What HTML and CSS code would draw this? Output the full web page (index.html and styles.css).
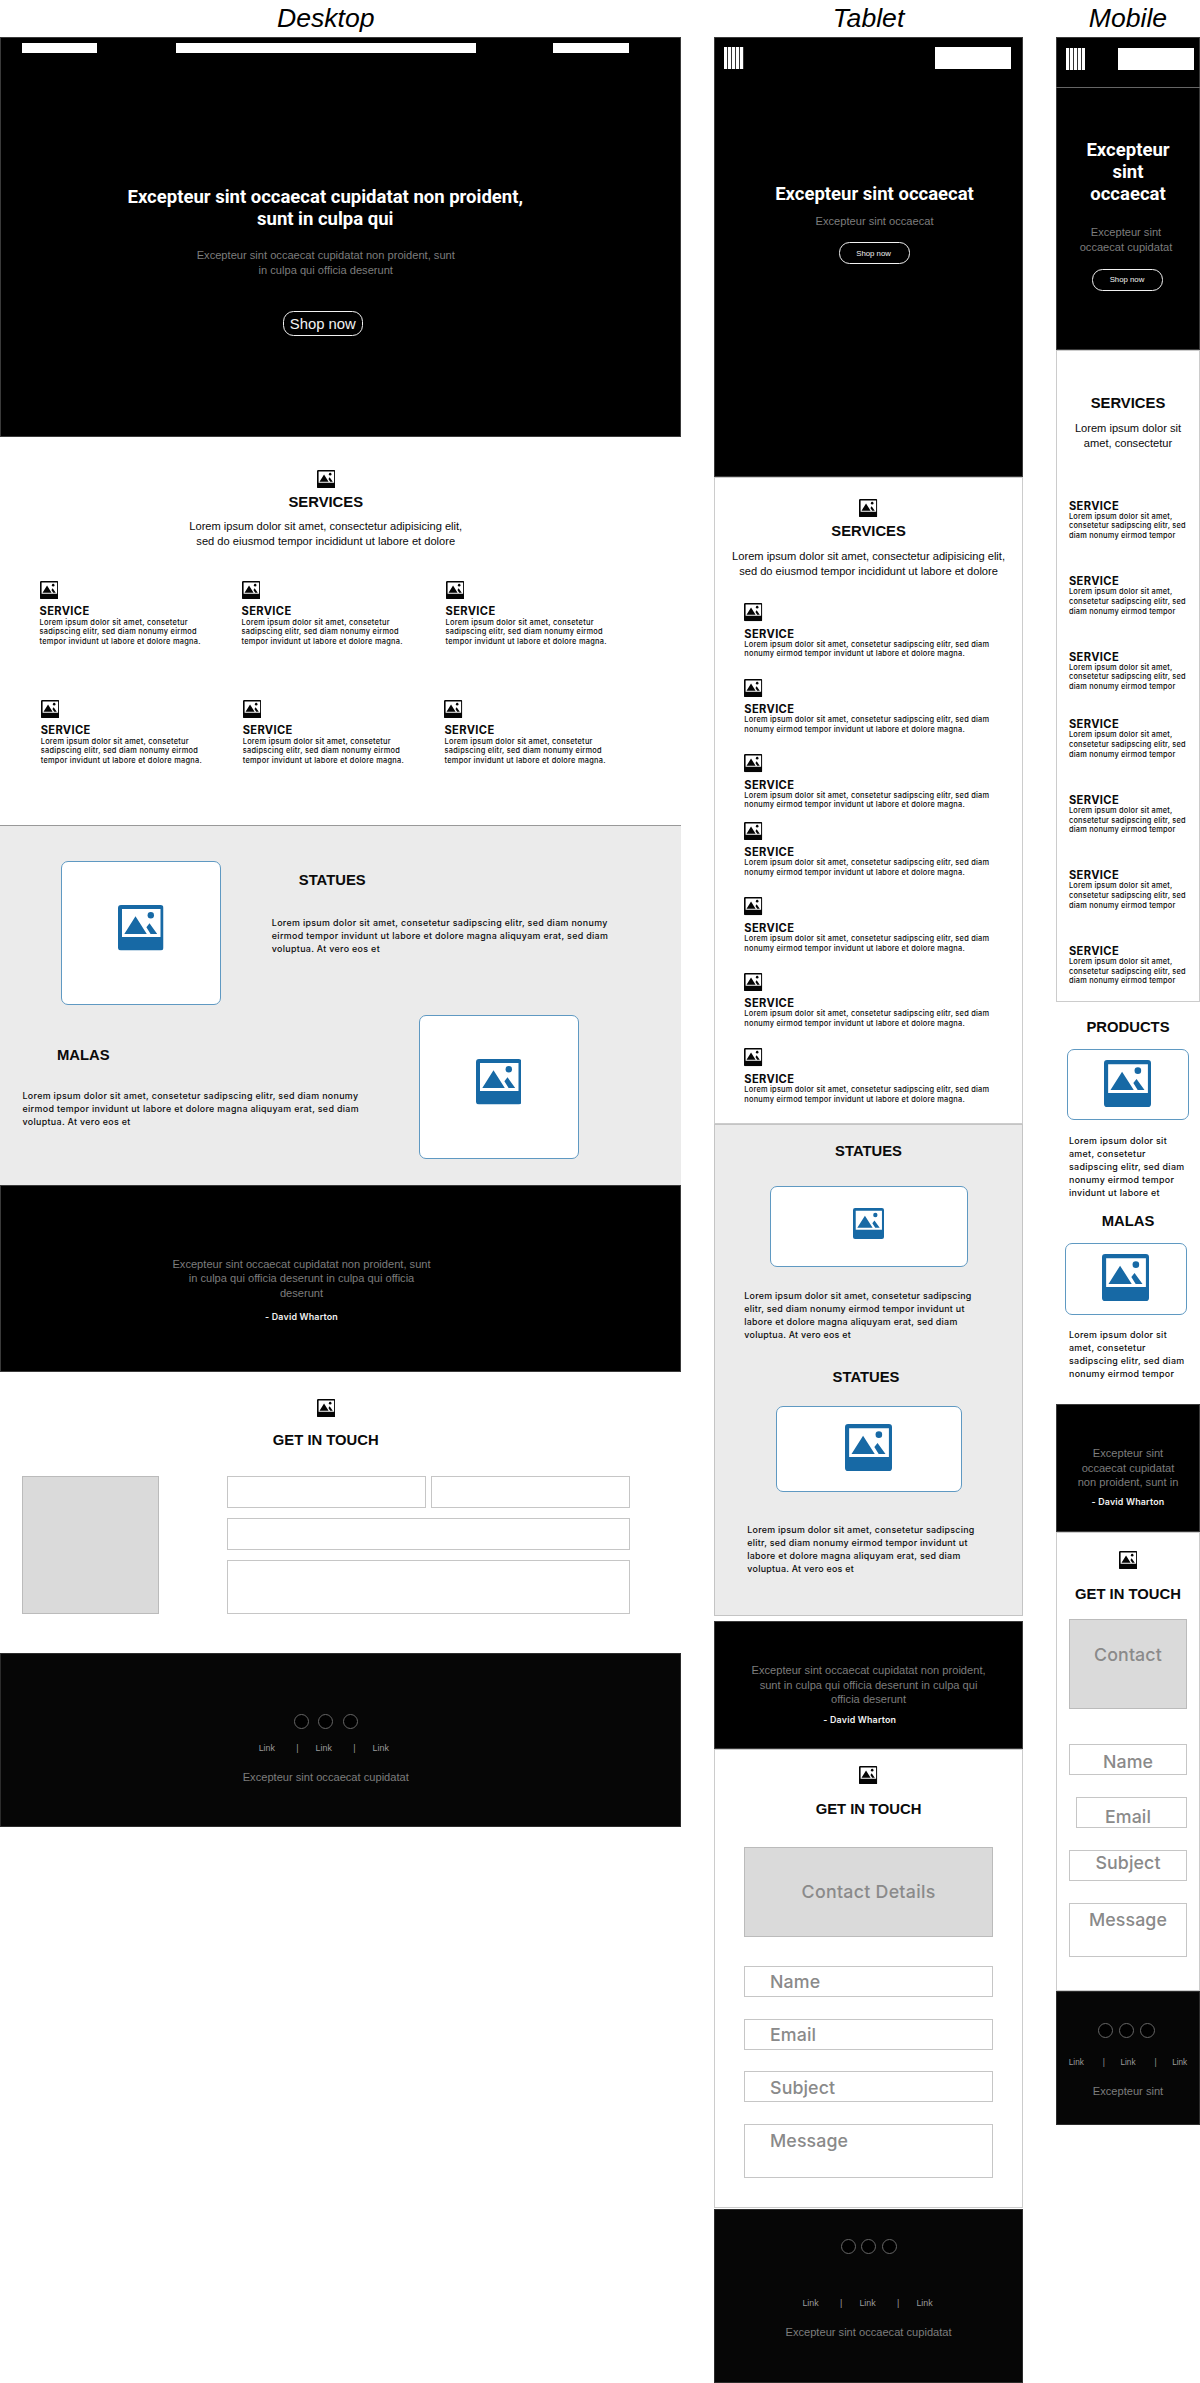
FILE: index.html
```html
<!DOCTYPE html>
<html lang="en">
<head>
<meta charset="utf-8">
<title>Responsive wireframes</title>
<link rel="stylesheet" href="styles.css">
</head>
<body>
<svg class="sprite" aria-hidden="true">
  <symbol id="photo" viewBox="0 0 45.5 45.5">
    <path fill-rule="evenodd" d="M3 0H42.5Q45.5 0 45.5 3V42.5Q45.5 45.5 42.5 45.5H3Q0 45.5 0 42.5V3Q0 0 3 0ZM4 4V32H42.5V4Z"/>
    <path d="M17.5 11.3L28.8 29H6.3ZM31.5 18.3L39.2 29H32.6L28.4 22.3Z"/>
    <circle cx="32.8" cy="10.3" r="3.2"/>
  </symbol>
</svg>
<main class="board">

  <article class="frame desktop">
    <h1 class="frame-title">Desktop</h1>
    <section class="dark hero">
      <nav class="nav"><span class="bar logo-bar"></span><span class="bar menu-bar"></span><span class="bar side-bar"></span></nav>
      <h2 class="headline">Excepteur sint occaecat cupidatat non proident,<br>sunt in culpa qui</h2>
      <p class="lead">Excepteur sint occaecat cupidatat non proident, sunt<br>in culpa qui officia deserunt</p>
      <a class="button">Shop now</a>
    </section>
    <section class="light services">
      <svg class="icon"><use href="#photo"/></svg>
      <h3 class="heading">SERVICES</h3>
      <p class="intro">Lorem ipsum dolor sit amet, consectetur adipisicing elit,<br>sed do eiusmod tempor incididunt ut labore et dolore</p>
      <div class="service-row">
        <div class="service"><svg class="icon"><use href="#photo"/></svg><h4>SERVICE</h4><p>Lorem ipsum dolor sit amet, consetetur<br>sadipscing elitr, sed diam nonumy eirmod<br>tempor invidunt ut labore et dolore magna.</p></div>
        <div class="service"><svg class="icon"><use href="#photo"/></svg><h4>SERVICE</h4><p>Lorem ipsum dolor sit amet, consetetur<br>sadipscing elitr, sed diam nonumy eirmod<br>tempor invidunt ut labore et dolore magna.</p></div>
        <div class="service"><svg class="icon"><use href="#photo"/></svg><h4>SERVICE</h4><p>Lorem ipsum dolor sit amet, consetetur<br>sadipscing elitr, sed diam nonumy eirmod<br>tempor invidunt ut labore et dolore magna.</p></div>
      </div>
      <div class="service-row second">
        <div class="service"><svg class="icon"><use href="#photo"/></svg><h4>SERVICE</h4><p>Lorem ipsum dolor sit amet, consetetur<br>sadipscing elitr, sed diam nonumy eirmod<br>tempor invidunt ut labore et dolore magna.</p></div>
        <div class="service"><svg class="icon"><use href="#photo"/></svg><h4>SERVICE</h4><p>Lorem ipsum dolor sit amet, consetetur<br>sadipscing elitr, sed diam nonumy eirmod<br>tempor invidunt ut labore et dolore magna.</p></div>
        <div class="service"><svg class="icon"><use href="#photo"/></svg><h4>SERVICE</h4><p>Lorem ipsum dolor sit amet, consetetur<br>sadipscing elitr, sed diam nonumy eirmod<br>tempor invidunt ut labore et dolore magna.</p></div>
      </div>
    </section>
    <section class="shaded products">
      <div class="product statues">
        <div class="card"><svg class="picture"><use href="#photo"/></svg></div>
        <div class="copy">
          <h3 class="heading">STATUES</h3>
          <p class="body-text">Lorem ipsum dolor sit amet, consetetur sadipscing elitr, sed diam nonumy<br>eirmod tempor invidunt ut labore et dolore magna aliquyam erat, sed diam<br>voluptua. At vero eos et</p>
        </div>
      </div>
      <div class="product malas">
        <div class="copy">
          <h3 class="heading">MALAS</h3>
          <p class="body-text">Lorem ipsum dolor sit amet, consetetur sadipscing elitr, sed diam nonumy<br>eirmod tempor invidunt ut labore et dolore magna aliquyam erat, sed diam<br>voluptua. At vero eos et</p>
        </div>
        <div class="card"><svg class="picture"><use href="#photo"/></svg></div>
      </div>
    </section>
    <section class="dark quote">
      <p class="lead">Excepteur sint occaecat cupidatat non proident, sunt<br>in culpa qui officia deserunt in culpa qui officia<br>deserunt</p>
      <p class="author">- David Wharton</p>
    </section>
    <section class="light contact">
      <svg class="icon"><use href="#photo"/></svg>
      <h3 class="heading">GET IN TOUCH</h3>
      <div class="contact-row">
        <div class="details"></div>
        <div class="form"><span class="field"></span><span class="field"></span><span class="field wide"></span><span class="field wide"></span></div>
      </div>
    </section>
    <footer class="footer">
      <div class="social"><i></i><i></i><i></i></div>
      <div class="links"><a>Link</a><span>|</span><a>Link</a><span>|</span><a>Link</a></div>
      <p class="lead">Excepteur sint occaecat cupidatat</p>
    </footer>
  </article>

  <article class="frame tablet">
    <h1 class="frame-title">Tablet</h1>
    <section class="dark hero">
      <nav class="nav"><span class="burger"></span><span class="bar"></span></nav>
      <h2 class="headline">Excepteur sint occaecat</h2>
      <p class="lead">Excepteur sint occaecat</p>
      <a class="button">Shop now</a>
    </section>
    <section class="light services">
      <svg class="icon"><use href="#photo"/></svg>
      <h3 class="heading">SERVICES</h3>
      <p class="intro">Lorem ipsum dolor sit amet, consectetur adipisicing elit,<br>sed do eiusmod tempor incididunt ut labore et dolore</p>
      <div class="service-list">
        <div class="service"><svg class="icon"><use href="#photo"/></svg><h4>SERVICE</h4><p>Lorem ipsum dolor sit amet, consetetur sadipscing elitr, sed diam<br>nonumy eirmod tempor invidunt ut labore et dolore magna.</p></div>
        <div class="service"><svg class="icon"><use href="#photo"/></svg><h4>SERVICE</h4><p>Lorem ipsum dolor sit amet, consetetur sadipscing elitr, sed diam<br>nonumy eirmod tempor invidunt ut labore et dolore magna.</p></div>
        <div class="service"><svg class="icon"><use href="#photo"/></svg><h4>SERVICE</h4><p>Lorem ipsum dolor sit amet, consetetur sadipscing elitr, sed diam<br>nonumy eirmod tempor invidunt ut labore et dolore magna.</p></div>
        <div class="service"><svg class="icon"><use href="#photo"/></svg><h4>SERVICE</h4><p>Lorem ipsum dolor sit amet, consetetur sadipscing elitr, sed diam<br>nonumy eirmod tempor invidunt ut labore et dolore magna.</p></div>
        <div class="service"><svg class="icon"><use href="#photo"/></svg><h4>SERVICE</h4><p>Lorem ipsum dolor sit amet, consetetur sadipscing elitr, sed diam<br>nonumy eirmod tempor invidunt ut labore et dolore magna.</p></div>
        <div class="service"><svg class="icon"><use href="#photo"/></svg><h4>SERVICE</h4><p>Lorem ipsum dolor sit amet, consetetur sadipscing elitr, sed diam<br>nonumy eirmod tempor invidunt ut labore et dolore magna.</p></div>
        <div class="service"><svg class="icon"><use href="#photo"/></svg><h4>SERVICE</h4><p>Lorem ipsum dolor sit amet, consetetur sadipscing elitr, sed diam<br>nonumy eirmod tempor invidunt ut labore et dolore magna.</p></div>
      </div>
    </section>
    <section class="shaded products">
      <div class="product first">
        <h3 class="heading">STATUES</h3>
        <div class="card"><svg class="picture"><use href="#photo"/></svg></div>
        <p class="body-text">Lorem ipsum dolor sit amet, consetetur sadipscing<br>elitr, sed diam nonumy eirmod tempor invidunt ut<br>labore et dolore magna aliquyam erat, sed diam<br>voluptua. At vero eos et</p>
      </div>
      <div class="product last">
        <h3 class="heading">STATUES</h3>
        <div class="card"><svg class="picture"><use href="#photo"/></svg></div>
        <p class="body-text">Lorem ipsum dolor sit amet, consetetur sadipscing<br>elitr, sed diam nonumy eirmod tempor invidunt ut<br>labore et dolore magna aliquyam erat, sed diam<br>voluptua. At vero eos et</p>
      </div>
    </section>
    <section class="dark quote">
      <p class="lead">Excepteur sint occaecat cupidatat non proident,<br>sunt in culpa qui officia deserunt in culpa qui<br>officia deserunt</p>
      <p class="author">- David Wharton</p>
    </section>
    <section class="light contact">
      <svg class="icon"><use href="#photo"/></svg>
      <h3 class="heading">GET IN TOUCH</h3>
      <div class="details">Contact Details</div>
      <div class="form"><span class="field">Name</span><span class="field">Email</span><span class="field">Subject</span><span class="field message">Message</span></div>
    </section>
    <footer class="footer">
      <div class="social"><i></i><i></i><i></i></div>
      <div class="links"><a>Link</a><span>|</span><a>Link</a><span>|</span><a>Link</a></div>
      <p class="lead">Excepteur sint occaecat cupidatat</p>
    </footer>
  </article>

  <article class="frame mobile">
    <h1 class="frame-title">Mobile</h1>
    <section class="dark hero">
      <nav class="nav"><span class="burger"></span><span class="bar"></span></nav>
      <h2 class="headline">Excepteur<br>sint<br>occaecat</h2>
      <p class="lead">Excepteur sint<br>occaecat cupidatat</p>
      <a class="button">Shop now</a>
    </section>
    <section class="light services">
      <h3 class="heading">SERVICES</h3>
      <p class="intro">Lorem ipsum dolor sit<br>amet, consectetur</p>
      <div class="service-list">
        <div class="service"><h4>SERVICE</h4><p>Lorem ipsum dolor sit amet,<br>consetetur sadipscing elitr, sed<br>diam nonumy eirmod tempor</p></div>
        <div class="service"><h4>SERVICE</h4><p>Lorem ipsum dolor sit amet,<br>consetetur sadipscing elitr, sed<br>diam nonumy eirmod tempor</p></div>
        <div class="service"><h4>SERVICE</h4><p>Lorem ipsum dolor sit amet,<br>consetetur sadipscing elitr, sed<br>diam nonumy eirmod tempor</p></div>
        <div class="service"><h4>SERVICE</h4><p>Lorem ipsum dolor sit amet,<br>consetetur sadipscing elitr, sed<br>diam nonumy eirmod tempor</p></div>
        <div class="service"><h4>SERVICE</h4><p>Lorem ipsum dolor sit amet,<br>consetetur sadipscing elitr, sed<br>diam nonumy eirmod tempor</p></div>
        <div class="service"><h4>SERVICE</h4><p>Lorem ipsum dolor sit amet,<br>consetetur sadipscing elitr, sed<br>diam nonumy eirmod tempor</p></div>
        <div class="service"><h4>SERVICE</h4><p>Lorem ipsum dolor sit amet,<br>consetetur sadipscing elitr, sed<br>diam nonumy eirmod tempor</p></div>
      </div>
    </section>
    <section class="products">
      <div class="product first">
        <h3 class="heading">PRODUCTS</h3>
        <div class="card"><svg class="picture"><use href="#photo"/></svg></div>
        <p class="body-text">Lorem ipsum dolor sit<br>amet, consetetur<br>sadipscing elitr, sed diam<br>nonumy eirmod tempor<br>invidunt ut labore et</p>
      </div>
      <div class="product last">
        <h3 class="heading">MALAS</h3>
        <div class="card"><svg class="picture"><use href="#photo"/></svg></div>
        <p class="body-text">Lorem ipsum dolor sit<br>amet, consetetur<br>sadipscing elitr, sed diam<br>nonumy eirmod tempor</p>
      </div>
    </section>
    <section class="dark quote">
      <p class="lead">Excepteur sint<br>occaecat cupidatat<br>non proident, sunt in</p>
      <p class="author">- David Wharton</p>
    </section>
    <section class="light contact">
      <svg class="icon"><use href="#photo"/></svg>
      <h3 class="heading">GET IN TOUCH</h3>
      <div class="details">Contact</div>
      <div class="form"><span class="field name">Name</span><span class="field email">Email</span><span class="field subject">Subject</span><span class="field message">Message</span></div>
    </section>
    <footer class="footer">
      <div class="social"><i></i><i></i><i></i></div>
      <div class="links"><a>Link</a><span>|</span><a>Link</a><span>|</span><a>Link</a></div>
      <p class="lead">Excepteur sint</p>
    </footer>
  </article>

</main>
</body>
</html>
```
FILE: styles.css
```css
* { box-sizing: border-box; }

body {
  margin: 0;
  background: #fff;
  color: #0a0a0a;
  font-family: "Liberation Sans", Arial, sans-serif;
  white-space: nowrap;
}

h1, h2, h3, h4, p { margin: 0; }
svg { display: block; flex: none; }
.sprite { display: none; }

.board { display: flex; align-items: flex-start; width: 1200px; height: 2383px; overflow: hidden; }
.frame { flex: none; }
.desktop { width: 680.5px; }
.tablet { width: 308.5px; margin-left: 33.8px; }
.mobile { width: 144px; margin-left: 33.2px; }

section, .footer { display: flex; flex-direction: column; align-items: center; }

/* Shared pieces */
.frame-title {
  height: 37px;
  padding-top: 1px;
  font-size: 26.6px;
  font-style: italic;
  font-weight: 400;
  line-height: 34px;
  text-align: center;
  color: #000;
}
.dark { background: #000; box-shadow: inset 0 0 0 1px #3a3a3a; }
.light { background: #fff; box-shadow: inset 0 0 0 1px #ccc; }
.shaded { background: #ebebeb; box-shadow: inset 0 0 0 1px #c4c4c4; }
.footer { background: #060606; box-shadow: inset 0 0 0 1px #2c2c2c; }

.headline {
  font: 700 18.5px/22.25px Roboto, sans-serif;
  color: #fff;
  text-align: center;
}
.lead, .intro { font-size: 11.12px; line-height: 14.83px; text-align: center; }
.lead { color: #7d7d7d; }
.heading { font-size: 14.8px; line-height: 18px; font-weight: 700; text-align: center; }
.body-text { font: 500 8.9px/13px Inter, sans-serif; letter-spacing: 0.31px; }
.author { font: 600 8.9px/12px Inter, sans-serif; letter-spacing: 0.18px; color: #f2f2f2; }
.icon { width: 18.3px; height: 18.3px; fill: #050505; }
.picture { width: 47px; height: 47px; fill: #1769a5; }
.card {
  display: flex;
  flex: none;
  justify-content: center;
  align-items: flex-start;
  background: #fff;
  border: 1px solid #5f99c2;
  border-radius: 7px;
}
.button {
  display: flex;
  align-items: center;
  justify-content: center;
  width: 71px;
  height: 22px;
  border: 1px solid #f2f2f2;
  border-radius: 10.5px;
  font-size: 7.8px;
  color: #f2f2f2;
}
.nav { display: flex; align-self: stretch; justify-content: space-between; align-items: flex-start; }
.bar { width: 76px; height: 21.5px; background: #fff; }
.burger {
  width: 19.5px;
  height: 22px;
  background: repeating-linear-gradient(90deg, #fff 0 3px, #333 3px 4px);
}

.service .icon { margin-bottom: 6px; }
.service h4 { font: 700 11.12px/12.3px Inter, sans-serif; letter-spacing: 0.36px; }
.service p { margin-bottom: -0.8px; font: 500 7.4px/9.6px Inter, sans-serif; letter-spacing: 0.27px; }
.service-list { align-self: flex-start; display: flex; flex-direction: column; }
.tablet .service p { letter-spacing: 0.24px; }
.mobile .service p { letter-spacing: 0.2px; }

.details {
  background: #dadada;
  border: 1px solid #bbb;
}
.details, .field { font: 500 17.8px/20px Inter, sans-serif; letter-spacing: 0.1px; color: #8a8a8a; }
.field { display: flex; align-items: center; height: 31px; padding-top: 1.6px; border: 1px solid #c6c6c6; }
.tablet .form, .mobile .form { display: flex; flex-direction: column; gap: 21.9px; }

.social { display: flex; gap: 5.5px; }
.social i { width: 15px; height: 15px; border: 1px solid #666; border-radius: 50%; background: #000; }
.links { display: flex; font-size: 8.9px; line-height: 12px; color: #9a9a9a; }
.links span { margin: 0 17px 0 21.4px; }

/* Desktop */
.desktop .frame-title { padding-right: 29px; }
.desktop section, .desktop .footer { padding-right: 29px; }
.desktop .light { box-shadow: none; }
.desktop .hero { height: 400px; }
.desktop .nav { padding: 6px 0 0 22.4px; justify-content: flex-start; }
.desktop .bar { height: 10px; }
.desktop .logo-bar { width: 74.5px; }
.desktop .menu-bar { width: 300.5px; margin-left: 79px; }
.desktop .side-bar { width: 75.6px; margin-left: 77px; }
.desktop .headline { margin: 133.2px 1px 0 0; }
.desktop .hero .lead { margin-top: 17.3px; }
.desktop .button {
  width: 80px;
  height: 25px;
  margin: 33.3px 6px 0 0;
  padding-top: 1px;
  font-size: 14.85px;
}

.desktop .services { height: 388px; padding-top: 33px; }
.desktop .services .heading { margin-top: 4.6px; }
.desktop .intro { margin-top: 8.5px; }
.desktop .service-row {
  display: grid;
  grid-template-columns: 202px 204px auto;
  align-self: flex-start;
  margin-top: 31.9px;
  padding-left: 39.5px;
}
.desktop .service-row.second {
  grid-template-columns: 202px 201.8px auto;
  margin-top: 54.4px;
  padding-left: 40.7px;
}

.desktop .products {
  height: 360px;
  padding: 36px 0 0;
  align-items: stretch;
  box-shadow: inset 0 1px #999;
}
.desktop .product { display: flex; align-items: flex-start; }
.desktop .card { width: 160px; height: 144px; padding-top: 43px; }
.desktop .picture { width: 45.5px; height: 45.5px; }
.desktop .heading { text-align: left; }
.desktop .statues { padding-left: 61px; }
.desktop .statues .copy { margin: 9.6px 0 0 50.8px; }
.desktop .statues .heading { padding-left: 27px; }
.desktop .body-text { letter-spacing: 0.33px; }
.desktop .statues .body-text { margin-top: 27.4px; }
.desktop .malas { margin-top: 10px; padding: 0 102px 0 22.5px; justify-content: space-between; }
.desktop .malas .copy { margin-top: 30.5px; }
.desktop .malas .heading { padding-left: 34.5px; }
.desktop .malas .body-text { margin-top: 25px; }

.desktop .quote { height: 187px; padding: 71.6px 77.5px 0 0; }
.desktop .author { margin-top: 10.3px; }

.desktop .contact { height: 281px; padding-top: 27px; }
.desktop .contact .heading { margin-top: 13.3px; }
.desktop .contact-row { display: flex; align-self: flex-start; margin-top: 27.4px; padding-left: 22px; }
.desktop .details { width: 136.5px; height: 138px; }
.desktop .form {
  display: grid;
  grid-template: 32px 32px 54px / 1fr 1fr;
  gap: 10px 5px;
  width: 403px;
  margin-left: 68px;
}
.desktop .field { height: auto; }
.desktop .wide { grid-column: span 2; }

.desktop .footer { height: 174px; padding-top: 61px; }
.desktop .social { gap: 9.4px; }
.desktop .links { margin: 12.6px 4px 0 0; }
.desktop .footer .lead { margin-top: 16.2px; }

/* Tablet */
.tablet .hero { height: 440px; }
.tablet .nav { padding: 10px 12px 0 10px; }
.tablet .headline { margin: 113.6px 0 0 12px; }
.tablet .hero .lead { margin: 9.4px 0 0 12px; }
.tablet .button { margin: 13.4px 0 0 12px; padding-right: 2px; }

.tablet .services { height: 647px; padding-top: 22px; }
.tablet .services > .heading { margin-top: 4.6px; }
.tablet .intro { margin-top: 8.8px; }
.tablet .service-list { gap: 20.5px; margin: 24.9px 0 0 30px; }
.tablet .service:nth-child(4) { margin-top: -7.8px; }

.tablet .products { height: 492px; padding-top: 17.9px; }
.tablet .product { display: flex; flex-direction: column; align-items: center; align-self: stretch; }
.tablet .body-text { align-self: flex-start; letter-spacing: 0.27px; }
.tablet .first .card { width: 198px; height: 81px; margin-top: 25.8px; padding-top: 21.5px; }
.tablet .first .picture { width: 31px; height: 31px; }
.tablet .first .body-text { margin: 22.3px 0 0 30px; }
.tablet .last .heading { margin: 26.6px 5px 0 0; }
.tablet .last .card { width: 186px; height: 86px; margin-top: 20.6px; padding-top: 16.7px; }
.tablet .last .body-text { margin: 30.4px 0 0 33px; }

.tablet .quote { height: 128px; margin-top: 5px; padding-top: 41.8px; }
.tablet .author { margin: 7.1px 17.6px 0 0; }

.tablet .contact { height: 459px; padding-top: 17px; }
.tablet .contact .heading { margin-top: 15.9px; }
.tablet .details {
  display: flex;
  align-items: center;
  justify-content: center;
  width: 249px;
  height: 90px;
  margin-top: 28.5px;
  padding-top: 1px;
  letter-spacing: 0.27px;
}
.tablet .form { width: 249px; margin-top: 29px; }
.tablet .field { padding-left: 25px; }
.tablet .message { height: 54px; padding-bottom: 22px; }

.tablet .footer { height: 174px; margin-top: 1px; padding-top: 30.3px; }
.tablet .links { margin: 42.3px 2px 0 0; }
.tablet .footer .lead { margin-top: 16.2px; }

/* Mobile */
.mobile .hero { height: 313px; }
.mobile .nav { height: 51px; padding: 11px 6px 0 10px; border-bottom: 1px solid #666; }
.mobile .headline { margin-top: 50.6px; }
.mobile .hero .lead { margin: 19.4px 4px 0 0; }
.mobile .button { margin-top: 14.6px; padding-right: 2px; }

.mobile .services { height: 652px; padding-top: 44.2px; }
.mobile .intro { margin-top: 8.8px; }
.mobile .service-list { gap: 34.4px; margin: 48.9px 0 0 13px; }
.mobile .service { height: 41.1px; }
.mobile .service:nth-child(4) { margin-top: -7.8px; }

.mobile .products { height: 402px; padding-top: 15.6px; }
.mobile .product { display: flex; flex-direction: column; align-items: center; align-self: stretch; }
.mobile .body-text { align-self: flex-start; margin: 13.3px 0 0 13px; }
.mobile .card { width: 122.5px; height: 71.5px; margin-top: 13.4px; padding-top: 10px; }
.mobile .last .heading { margin-top: 13.2px; }
.mobile .last .card { margin-right: 4px; }

.mobile .quote { height: 128px; padding-top: 41.7px; }
.mobile .author { margin-top: 6px; }

.mobile .contact { height: 459px; padding-top: 19px; }
.mobile .contact .heading { margin-top: 15.9px; }
.mobile .details {
  width: 118px;
  height: 90px;
  margin-top: 16.3px;
  padding-top: 24.4px;
  text-align: center;
}
.mobile .form { width: 118px; margin-top: 34.6px; }
.mobile .field { justify-content: center; }
.mobile .name { padding-top: 5.2px; }
.mobile .email { margin-left: 7px; padding: 9px 7px 0 0; }
.mobile .subject { padding-bottom: 6px; }
.mobile .message { height: 54px; padding-bottom: 22px; }

.mobile .footer { height: 134px; padding-top: 32px; }
.mobile .social { gap: 6px; padding-right: 2px; }
.mobile .links { margin-top: 18.6px; font-size: 8.2px; }
.mobile .links span { margin: 0 15.5px 0 19px; }
.mobile .footer .lead { margin-top: 15.8px; }
```
